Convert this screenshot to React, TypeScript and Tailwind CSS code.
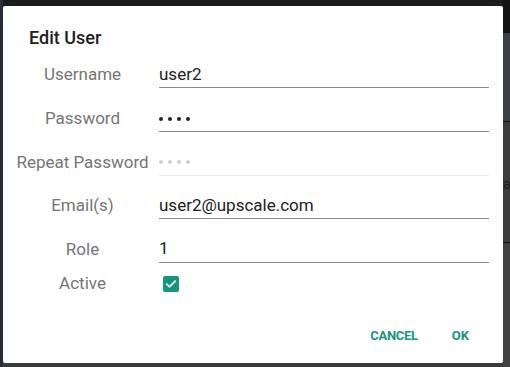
import React from "react";

const font = { fontFamily: "Roboto, 'Noto Sans', sans-serif" };

function Field({ label, children, line = "border-[#8a8a8a]", h = "h-[44px]" }: { label: string; children: React.ReactNode; line?: string; h?: string }) {
    return <div className={`flex items-center ${h}`}>
        <div className="w-[133px] ml-[13px] text-center text-[17px] text-[#757575] whitespace-nowrap">{label}</div>
        <div className={`ml-[10px] w-[330px] h-[26px] flex items-center border-b ${line} text-[17px] text-[#212121]`}>
            {children}
        </div>
    </div>;
}

function Dots({ color }: { color: string }) {
    return <div className="flex gap-[5px]">
        {[0, 1, 2, 3].map(i => <span key={i} className={`w-[4px] h-[4px] rounded-full ${color}`}></span>)}
    </div>;
}

export default function App() {
    return <div className="w-[510px] h-[367px] flex bg-[#3a3a3a] overflow-hidden" style={font}>
        {/* left edge of the page behind the overlay */}
        <div className="w-[3px] h-full bg-[#26303a]"></div>
        <div className="w-[500px] flex flex-col">
            <div className="h-[6px] bg-[#1c1c1c]"></div>
            <div className="h-[357px] bg-white rounded-[2px] shadow-lg flex flex-col">
                <div className="pt-[20px] pl-[26px] h-[44px] text-[18px] font-medium text-[#212121] leading-[24px]">Edit User</div>
                <div className="h-[3px]"></div>
                <Field label="Username">user2</Field>
                <Field label="Password"><Dots color="bg-[#222]" /></Field>
                <Field label="Repeat Password" line="border-[#ececec]" h="h-[43px]"><Dots color="bg-[#d0d0d0]" /></Field>
                <Field label="Email(s)">user2@upscale.com</Field>
                <Field label="Role" h="h-[43px]">1</Field>
                <div className="flex items-center h-[26px]">
                    <div className="w-[133px] ml-[13px] text-center text-[17px] text-[#757575]">Active</div>
                    <div className="ml-[14px] w-[16px] h-[16px] rounded-[2px] bg-[#16967f] flex items-center justify-center">
                        <svg width="12" height="12" viewBox="0 0 24 24" fill="none" stroke="white" strokeWidth="3.5" strokeLinecap="square">
                            <path d="M4 12.5l5 5L20 6.5" />
                        </svg>
                    </div>
                </div>
                <div className="flex justify-end items-center h-[36px] mt-[21px] pr-[26px] text-[13px] font-bold text-[#16967f]">
                    <div className="px-2 h-full flex items-center tracking-[-0.3px]">CANCEL</div>
                    <div className="w-[18px]"></div>
                    <div className="px-2 h-full flex items-center">OK</div>
                </div>
            </div>
            <div className="flex-1 bg-[#3a3a3a]"></div>
        </div>
        {/* right edge of the page behind the overlay */}
        <div className="w-[7px] flex flex-col">
            <div className="h-[33px] bg-[#131313]"></div>
            <div className="h-[88px] bg-[#3b4047]"></div>
            <div className="h-[1px] bg-[#111]"></div>
            <div className="h-[120px] bg-[#3c3c3c] text-[14px] text-[#1c1c1c] leading-[44px] pt-[40px]">a</div>
            <div className="h-[1px] bg-[#111]"></div>
            <div className="flex-1 bg-[#404040]"></div>
        </div>
    </div>;
}
